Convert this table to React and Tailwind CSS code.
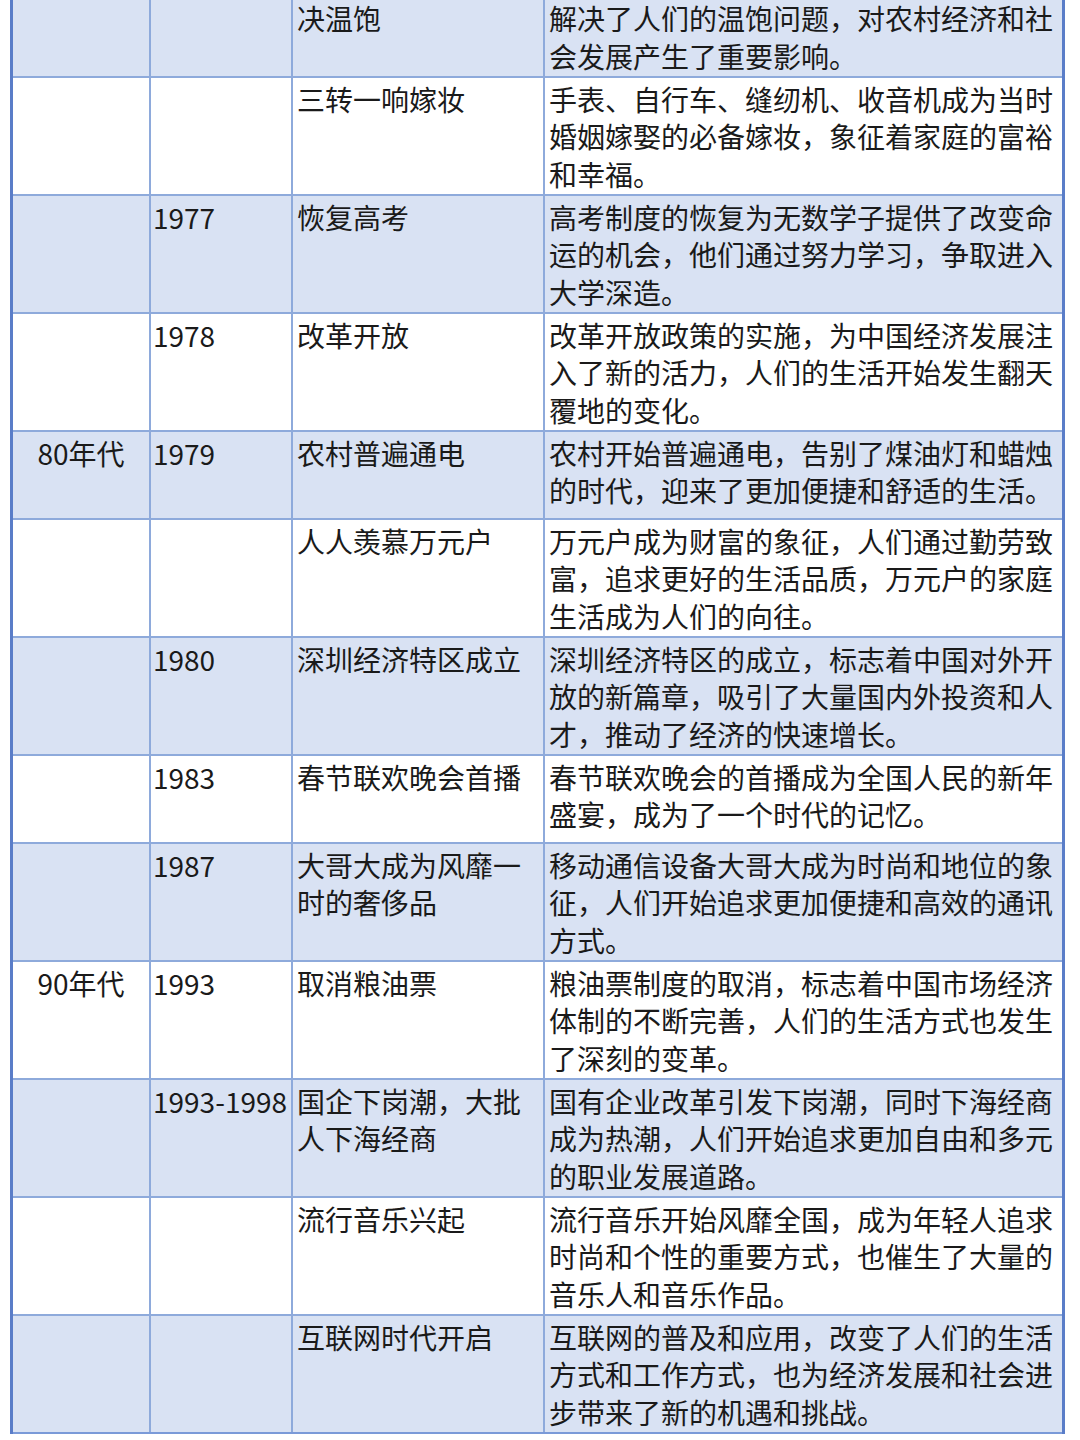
import React from 'react';

const rows = [
  ['', '', '联产承包责任制解决温饱', '家庭联产承包责任制的推行从根本上彻底解决了人们的温饱问题，对农村经济和社会发展产生了重要影响。'],
  ['', '', '三转一响嫁妆', '手表、自行车、缝纫机、收音机成为当时婚姻嫁娶的必备嫁妆，象征着家庭的富裕和幸福。'],
  ['', '1977', '恢复高考', '高考制度的恢复为无数学子提供了改变命运的机会，他们通过努力学习，争取进入大学深造。'],
  ['', '1978', '改革开放', '改革开放政策的实施，为中国经济发展注入了新的活力，人们的生活开始发生翻天覆地的变化。'],
  ['80年代', '1979', '农村普遍通电', '农村开始普遍通电，告别了煤油灯和蜡烛的时代，迎来了更加便捷和舒适的生活。'],
  ['', '', '人人羡慕万元户', '万元户成为财富的象征，人们通过勤劳致富，追求更好的生活品质，万元户的家庭生活成为人们的向往。'],
  ['', '1980', '深圳经济特区成立', '深圳经济特区的成立，标志着中国对外开放的新篇章，吸引了大量国内外投资和人才，推动了经济的快速增长。'],
  ['', '1983', '春节联欢晚会首播', '春节联欢晚会的首播成为全国人民的新年盛宴，成为了一个时代的记忆。'],
  ['', '1987', '大哥大成为风靡一时的奢侈品', '移动通信设备大哥大成为时尚和地位的象征，人们开始追求更加便捷和高效的通讯方式。'],
  ['90年代', '1993', '取消粮油票', '粮油票制度的取消，标志着中国市场经济体制的不断完善，人们的生活方式也发生了深刻的变革。'],
  ['', '1993-1998', '国企下岗潮，大批人下海经商', '国有企业改革引发下岗潮，同时下海经商成为热潮，人们开始追求更加自由和多元的职业发展道路。'],
  ['', '', '流行音乐兴起', '流行音乐开始风靡全国，成为年轻人追求时尚和个性的重要方式，也催生了大量的音乐人和音乐作品。'],
  ['', '', '互联网时代开启', '互联网的普及和应用，改变了人们的生活方式和工作方式，也为经济发展和社会进步带来了新的机遇和挑战。'],
];

const App = () => {
  return (
    <div
      className="w-[1080px] h-[1440px] overflow-hidden bg-white text-[#1a1a1a]"
      style={{ fontFamily: '"Noto Sans CJK SC", "Noto Sans", sans-serif' }}
    >
      <div className="ml-[10px] mt-[-40px] w-[1055px] border-x-[3px] border-x-[#5a7dc8] text-[28px] leading-[37.33px]">
        {rows.map(([decade, year, event, desc], i) => (
          <div
            key={i}
            className={`grid grid-cols-[138px_142px_252px_517px] min-h-[88px] border-b-2 ${
              i === rows.length - 1 ? 'border-b-[#7a9ad8]' : 'border-b-[#8eaadb]'
            } ${i % 2 === 0 ? 'bg-[#d9e2f3]' : 'bg-white'}`}
          >
            <div className="border-r-2 border-r-[#8eaadb] pt-[3px] pb-[1px] text-center">{decade}</div>
            <div className="border-r-2 border-r-[#8eaadb] pt-[3px] pb-[1px] pl-[2px] whitespace-nowrap">{year}</div>
            <div className="border-r-2 border-r-[#8eaadb] pt-[3px] pb-[1px] px-[4px]">{event}</div>
            <div className="pt-[3px] pb-[1px] pl-[4px] pr-[2px]">{desc}</div>
          </div>
        ))}
      </div>
    </div>
  );
};

export default App;
